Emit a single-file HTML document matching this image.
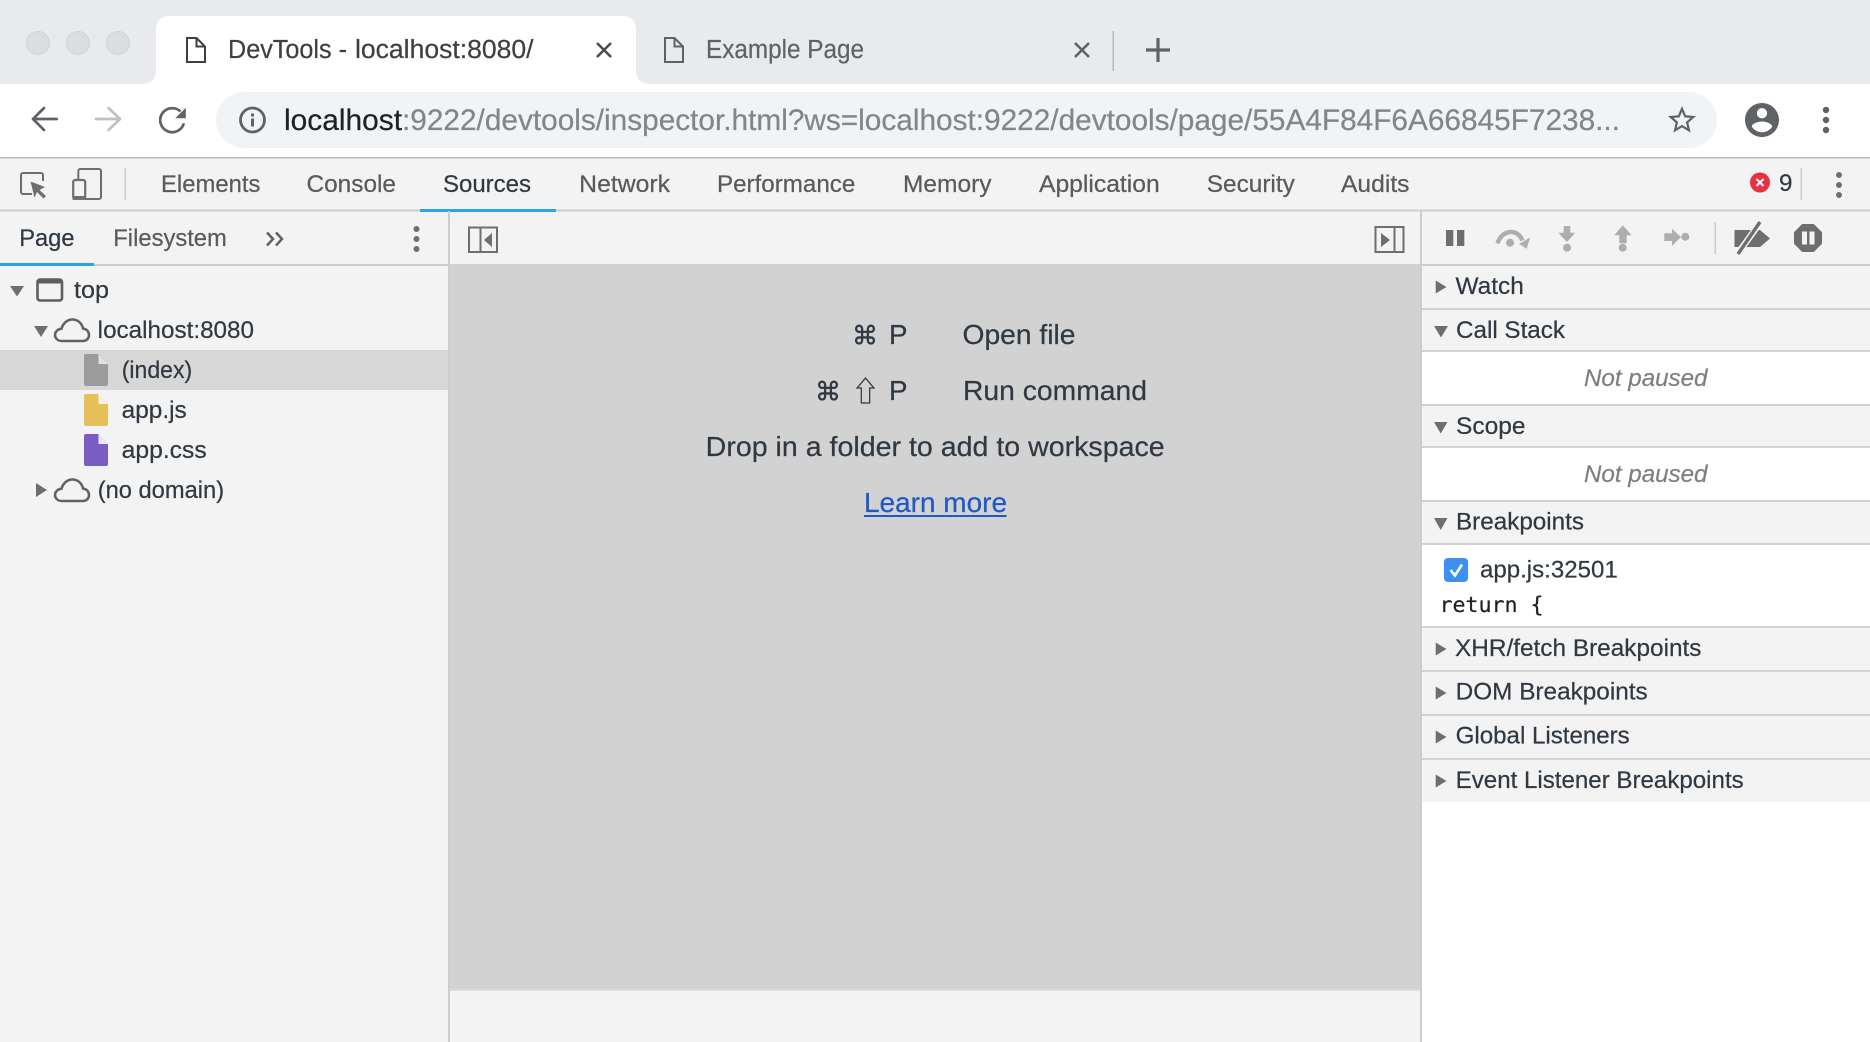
<!DOCTYPE html>
<html lang="en"><head><meta charset="utf-8"><title>DevTools</title>
<style>
html,body{margin:0;padding:0;width:1870px;height:1042px;overflow:hidden;background:#fff}
svg{position:absolute;left:0;top:0;display:block;filter:blur(.35px)}
text{font-family:"Liberation Sans",Arial,sans-serif;white-space:pre;stroke-width:.22px}
.d{font-size:24px;fill:#303942;stroke:#303942}
.n{font-size:23.7px;fill:#5a5a5a;stroke:#5a5a5a}
.s{fill:#303942;stroke:#303942}
.c{font-size:27.700px}
.m{font-size:26px;font-family:"DejaVu Sans",sans-serif;stroke-width:.4px}
</style></head><body>
<svg width="1870" height="1042" viewBox="0 0 1870 1042" xmlns="http://www.w3.org/2000/svg">
<!-- tab strip -->
<rect width="1870" height="84" fill="#e8eaed"/>
<rect y="84" width="1870" height="73" fill="#fff"/>
<g fill="#dcdde0" stroke="#d2d3d6" stroke-width="1"><circle cx="38" cy="43" r="11.5"/><circle cx="78" cy="43" r="11.5"/><circle cx="118" cy="43" r="11.5"/></g>
<path d="M142 84Q156 84 156 70V30Q156 16 170 16H622Q636 16 636 30V70Q636 84 650 84Z" fill="#fff"/>
<path d="M187 38H196.500L205 46.500V62H187ZM196.500 38V46.500H205" fill="none" stroke="#3c4043" stroke-width="2"/>
<text x="228" y="58" font-size="25.5" fill="#3c4043" stroke="#3c4043" textLength="119" lengthAdjust="spacingAndGlyphs">DevTools -</text>
<text x="355" y="58" font-size="25.5" fill="#3c4043" stroke="#3c4043" textLength="178.500" lengthAdjust="spacingAndGlyphs">localhost:8080/</text>
<path d="M597 43L611 57M611 43L597 57" stroke="#4a4d51" stroke-width="2.600"/>
<path d="M665 38H674.500L683 46.500V62H665ZM674.500 38V46.500H683" fill="none" stroke="#5f6368" stroke-width="2"/>
<text x="706" y="58" font-size="25.5" fill="#5f6368" stroke="#5f6368" textLength="158" lengthAdjust="spacingAndGlyphs">Example Page</text>
<path d="M1075 43L1089 57M1089 43L1075 57" stroke="#5f6368" stroke-width="2.600"/>
<rect x="1112.500" y="31" width="1.500" height="40" fill="#b6b8bb"/>
<path d="M1146 50H1170M1158 38V62" stroke="#5f6368" stroke-width="3.200"/>
<!-- nav -->
<path d="M56.700 119H33.500M44 108L33 119L44 130" fill="none" stroke="#5f6368" stroke-width="2.700" stroke-linecap="round" stroke-linejoin="round"/>
<path d="M96 119H119.500M108.500 108L120 119L108.500 130" fill="none" stroke="#bdc1c6" stroke-width="2.700" stroke-linecap="round" stroke-linejoin="round"/>
<path d="M180.500 111.500A12 12 0 1 0 183.800 123.300" fill="none" stroke="#5f6368" stroke-width="2.700"/>
<path d="M185.800 107.800V118.200H175.200Z" fill="#5f6368"/>
<rect x="216" y="92" width="1501" height="56" rx="28" fill="#f1f3f4"/>
<circle cx="252.500" cy="120" r="12" fill="none" stroke="#5f6368" stroke-width="2.800"/>
<rect x="251" y="118.500" width="3" height="8" fill="#5f6368"/><rect x="251" y="113.500" width="3" height="3" fill="#5f6368"/>
<text x="284" y="130" font-size="30" fill="#202124" stroke="#202124" textLength="118" lengthAdjust="spacingAndGlyphs">localhost</text>
<text x="402" y="130" font-size="30" fill="#80868b" stroke="#80868b" textLength="1218" lengthAdjust="spacingAndGlyphs">:9222/devtools/inspector.html?ws=localhost:9222/devtools/page/55A4F84F6A66845F7238...</text>
<path transform="translate(1665.200 103.200) scale(1.400)" fill="#5f6368" d="M22 9.240l-7.190-.62L12 2 9.190 8.630 2 9.240l5.460 4.730L5.820 21 12 17.270 18.180 21l-1.630-7.030L22 9.240zM12 15.400l-3.760 2.270 1-4.280-3.320-2.880 4.380-.38L12 6.100l1.710 4.040 4.380.38-3.320 2.880 1 4.280L12 15.400z"/>
<path transform="translate(1741.600 99.600) scale(1.700)" fill="#5f6368" d="M12 2C6.480 2 2 6.480 2 12s4.480 10 10 10 10-4.480 10-10S17.520 2 12 2zm0 3c1.660 0 3 1.340 3 3s-1.340 3-3 3-3-1.340-3-3 1.340-3 3-3zm0 14.200c-2.500 0-4.710-1.280-6-3.220.03-1.990 4-3.080 6-3.080 1.990 0 5.970 1.090 6 3.080-1.290 1.940-3.500 3.220-6 3.220z"/>
<g fill="#5f6368"><circle cx="1826" cy="110" r="3.200"/><circle cx="1826" cy="120" r="3.200"/><circle cx="1826" cy="130" r="3.200"/></g>
<rect y="157" width="1870" height="1.500" fill="#b9b9b9"/>
<!-- devtools background -->
<rect y="158.500" width="1870" height="884" fill="#f3f3f3"/>
<rect y="209.500" width="1870" height="2" fill="#cdcdcd"/>
<path d="M32 194H23a2 2 0 0 1-2-2V175a2 2 0 0 1 2-2H41a2 2 0 0 1 2 2V181" fill="none" stroke="#6e6e6e" stroke-width="2"/>
<path d="M30.500 181.500L45 187L39.500 190L46 196L43.500 198.500L37 192L34.500 197.500Z" fill="#6e6e6e"/>
<path d="M78.300 179V171a2 2 0 0 1 2-2H99a2 2 0 0 1 2 2V197a2 2 0 0 1-2 2H85" fill="none" stroke="#6e6e6e" stroke-width="2"/>
<rect x="73.200" y="180" width="12" height="18.800" rx="2" fill="#f3f3f3" stroke="#6e6e6e" stroke-width="2.200"/>
<rect x="72.500" y="196" width="13.500" height="3.800" fill="#6e6e6e"/>
<rect x="124.500" y="168" width="1.500" height="32" fill="#ccc"/>
<text class="n" x="161" y="192" textLength="99.400" lengthAdjust="spacingAndGlyphs">Elements</text>
<text class="n" x="306.500" y="192" textLength="89.500" lengthAdjust="spacingAndGlyphs">Console</text>
<text class="n" x="443" y="192" style="fill:#303942;stroke:#303942" textLength="88" lengthAdjust="spacingAndGlyphs">Sources</text>
<text class="n" x="579.200" y="192" textLength="90.800" lengthAdjust="spacingAndGlyphs">Network</text>
<text class="n" x="717" y="192" textLength="138.300" lengthAdjust="spacingAndGlyphs">Performance</text>
<text class="n" x="903" y="192" textLength="88.500" lengthAdjust="spacingAndGlyphs">Memory</text>
<text class="n" x="1039" y="192" textLength="120.700" lengthAdjust="spacingAndGlyphs">Application</text>
<text class="n" x="1206.800" y="192" textLength="88" lengthAdjust="spacingAndGlyphs">Security</text>
<text class="n" x="1341" y="192" textLength="68.500" lengthAdjust="spacingAndGlyphs">Audits</text>
<rect x="420" y="209" width="136" height="3" fill="#2aa4e6"/>
<circle cx="1760" cy="182.500" r="10" fill="#e8303f"/>
<path d="M1756.500 179L1763.500 186M1763.500 179L1756.500 186" stroke="#fff" stroke-width="2"/>
<text class="n" x="1779" y="191" style="fill:#303942;stroke:#303942" textLength="13.500" lengthAdjust="spacingAndGlyphs">9</text>
<rect x="1800.500" y="168" width="1.500" height="32" fill="#ccc"/>
<g fill="#6e6e6e"><circle cx="1839" cy="175" r="3"/><circle cx="1839" cy="185" r="3"/><circle cx="1839" cy="195" r="3"/></g>
<!-- left sidebar -->
<text class="n" x="19.200" y="246" style="fill:#303942;stroke:#303942" textLength="55.300" lengthAdjust="spacingAndGlyphs">Page</text>
<text class="n" x="113.300" y="246" textLength="113.500" lengthAdjust="spacingAndGlyphs">Filesystem</text>
<path d="M267 232.500L273 239L267 245.500M276 232.500L282 239L276 245.500" fill="none" stroke="#5f6368" stroke-width="2.500"/>
<g fill="#6e6e6e"><circle cx="416.500" cy="229" r="3"/><circle cx="416.500" cy="239" r="3"/><circle cx="416.500" cy="249" r="3"/></g>
<rect y="264" width="450" height="2" fill="#cdcdcd"/>
<rect y="263" width="94" height="3" fill="#2aa4e6"/>
<rect x="448" y="211" width="2" height="831" fill="#cdcdcd"/>
<rect y="350" width="448" height="40" fill="#d7d7d7"/>
<!-- tree -->
<path d="M10 286H24L17 296.500Z" fill="#6e6e6e"/>
<rect x="37.500" y="279.500" width="24.500" height="21" rx="2.500" fill="none" stroke="#5e5e5e" stroke-width="2.600"/>
<rect x="37.500" y="279.500" width="24.500" height="4" fill="#5e5e5e"/>
<text class="d" x="74" y="298" textLength="35" lengthAdjust="spacingAndGlyphs">top</text>
<path d="M34 326H48L41 337Z" fill="#6e6e6e"/>
<path transform="translate(54 318)" d="M8 23C3 23 1 19.500 1 17C1 13.500 4 11 7.500 10.800C9 5 13.500 1.500 18.500 1.500C24 1.500 28 5.500 29 10.500C33 11 35 14 35 17C35 20.500 32.500 23 29 23Z" fill="none" stroke="#5f6368" stroke-width="2.500"/>
<text class="d" x="97.700" y="338" textLength="156.300" lengthAdjust="spacingAndGlyphs">localhost:8080</text>
<path d="M86 354H98L108 364V384a2 2 0 0 1-2 2H86a2 2 0 0 1-2-2V356a2 2 0 0 1 2-2Z" fill="#9c9c9c"/><path d="M98.500 354.500V364H108Z" fill="#e2e2e2"/>
<text class="d" x="121.700" y="378" textLength="70.500" lengthAdjust="spacingAndGlyphs">(index)</text>
<path d="M86 394H98L108 404V424a2 2 0 0 1-2 2H86a2 2 0 0 1-2-2V396a2 2 0 0 1 2-2Z" fill="#e6c15a"/><path d="M98.500 394.500V404H108Z" fill="#f8f2df"/>
<text class="d" x="121.700" y="418" textLength="65" lengthAdjust="spacingAndGlyphs">app.js</text>
<path d="M86 434H98L108 444V464a2 2 0 0 1-2 2H86a2 2 0 0 1-2-2V436a2 2 0 0 1 2-2Z" fill="#7c5dc6"/><path d="M98.500 434.500V444H108Z" fill="#ece6f6"/>
<text class="d" x="121.700" y="458" textLength="85" lengthAdjust="spacingAndGlyphs">app.css</text>
<path d="M36 483L47 490L36 497Z" fill="#6e6e6e"/>
<path transform="translate(54 478)" d="M8 23C3 23 1 19.500 1 17C1 13.500 4 11 7.500 10.800C9 5 13.500 1.500 18.500 1.500C24 1.500 28 5.500 29 10.500C33 11 35 14 35 17C35 20.500 32.500 23 29 23Z" fill="none" stroke="#5f6368" stroke-width="2.500"/>
<text class="d" x="97.700" y="498" textLength="126.400" lengthAdjust="spacingAndGlyphs">(no domain)</text>
<!-- center -->
<rect x="469" y="227.500" width="28" height="24.500" fill="none" stroke="#6e6e6e" stroke-width="2"/>
<rect x="479.500" y="227.500" width="2" height="24.500" fill="#6e6e6e"/>
<path d="M492 233V247L484 240Z" fill="#6e6e6e"/>
<rect x="450" y="264" width="970" height="725" fill="#d2d2d2"/>
<rect x="450" y="989" width="970" height="2" fill="#dcdcdc"/>
<rect x="1375.500" y="227" width="28" height="25" fill="none" stroke="#6e6e6e" stroke-width="2"/>
<rect x="1393.500" y="227" width="2" height="25" fill="#6e6e6e"/>
<path d="M1381 233V247L1390 240Z" fill="#6e6e6e"/>
<text class="s m" x="852" y="344.500" textLength="26" lengthAdjust="spacingAndGlyphs">⌘</text>
<text class="s c" x="889" y="344" textLength="18.500" lengthAdjust="spacingAndGlyphs">P</text>
<text class="s c" x="962.500" y="344" textLength="113" lengthAdjust="spacingAndGlyphs">Open file</text>
<text class="s m" x="815" y="400.500" textLength="26" lengthAdjust="spacingAndGlyphs">⌘</text>
<text x="865.500" y="401" text-anchor="middle" fill="#303942" stroke="#303942" style='font-size:28px;font-family:"Noto Sans CJK JP","Noto Sans CJK SC","DejaVu Sans",sans-serif'>⇧</text>
<text class="s c" x="889" y="400" textLength="18.500" lengthAdjust="spacingAndGlyphs">P</text>
<text class="s c" x="963" y="400" textLength="184" lengthAdjust="spacingAndGlyphs">Run command</text>
<text class="s c" x="705.700" y="456" textLength="459" lengthAdjust="spacingAndGlyphs">Drop in a folder to add to workspace</text>
<text class="c" x="864" y="512" fill="#1f58c8" stroke="#1f58c8" textLength="143" lengthAdjust="spacingAndGlyphs">Learn more</text>
<rect x="864" y="515" width="142.500" height="2" fill="#1f58c8"/>
<!-- right panel -->
<rect x="1420" y="211" width="2" height="831" fill="#cdcdcd"/>
<rect x="1422" y="264" width="448" height="2" fill="#cdcdcd"/>
<rect x="1714.500" y="222" width="1.500" height="32" fill="#ccc"/>
<rect x="1446" y="230" width="7.300" height="16" fill="#6e6e6e"/><rect x="1457" y="230" width="7.300" height="16" fill="#6e6e6e"/>
<g fill="#aeaeae">
<path d="M1497.500 243.500C1500 235.500 1505.500 232 1511 232C1516 232 1520 235 1522.500 240.500" fill="none" stroke="#aeaeae" stroke-width="4.400"/>
<path d="M1519 244L1530 237.500L1526.700 248.700Z"/><circle cx="1510" cy="242.700" r="4"/>
<path d="M1563.700 226H1570.300V232.700H1575.300L1567 242L1558.300 232.700H1563.700Z"/><circle cx="1567" cy="247.700" r="4"/>
<path d="M1622.700 225.300L1631.700 235.300H1626.700V243.300H1619.300V235.300H1614.300Z"/><circle cx="1622.700" cy="247.700" r="4"/>
<path d="M1664.300 233.300H1672V228.700L1681 237L1672 246V241H1664.300Z"/><circle cx="1685.300" cy="236.700" r="4"/>
</g>
<path d="M1734.500 230H1760L1770 238.500L1760 247H1734.500Z" fill="#6e6e6e"/>
<path d="M1762 220L1736 256" stroke="#f3f3f3" stroke-width="6.500"/>
<path d="M1760 222L1738 254" stroke="#6e6e6e" stroke-width="3.400"/>
<path d="M1802.200 224H1813.800L1822 232.200V243.800L1813.800 252H1802.200L1794 243.800V232.200Z" fill="#6e6e6e"/>
<rect x="1802" y="231.500" width="5" height="13" fill="#f3f3f3"/><rect x="1809.500" y="231.500" width="5" height="13" fill="#f3f3f3"/>
<rect x="1422" y="308" width="448" height="2" fill="#d2d2d2"/>
<rect x="1422" y="350" width="448" height="2" fill="#d2d2d2"/>
<rect x="1422" y="352" width="448" height="52" fill="#fff"/>
<rect x="1422" y="404" width="448" height="2" fill="#d2d2d2"/>
<rect x="1422" y="446" width="448" height="2" fill="#d2d2d2"/>
<rect x="1422" y="448" width="448" height="52" fill="#fff"/>
<rect x="1422" y="500" width="448" height="2" fill="#d2d2d2"/>
<rect x="1422" y="543" width="448" height="2" fill="#d2d2d2"/>
<rect x="1422" y="545" width="448" height="81" fill="#fff"/>
<rect x="1422" y="626" width="448" height="2" fill="#d2d2d2"/>
<rect x="1422" y="670" width="448" height="2" fill="#d2d2d2"/>
<rect x="1422" y="714" width="448" height="2" fill="#d2d2d2"/>
<rect x="1422" y="758" width="448" height="2" fill="#d2d2d2"/>
<rect x="1422" y="802" width="448" height="240" fill="#fff"/>
<g fill="#6e6e6e">
<path d="M1435.700 280.500L1446.500 287L1435.700 293.500Z"/>
<path d="M1434 326H1448L1441 337.500Z"/>
<path d="M1434 422H1447.500L1440.700 433.500Z"/>
<path d="M1434 518H1447.500L1440.700 530Z"/>
<path d="M1435.700 642.500L1446.500 649L1435.700 655.500Z"/>
<path d="M1435.700 686.500L1446.500 693L1435.700 699.500Z"/>
<path d="M1435.700 730.500L1446.500 737L1435.700 743.500Z"/>
<path d="M1435.700 774.500L1446.500 781L1435.700 787.500Z"/>
</g>
<text class="d" x="1455.500" y="294" textLength="68.300" lengthAdjust="spacingAndGlyphs">Watch</text>
<text class="d" x="1456" y="338" textLength="109" lengthAdjust="spacingAndGlyphs">Call Stack</text>
<text x="1584" y="386" font-size="24" font-style="italic" fill="#7f7f7f" stroke="#7f7f7f" textLength="123.500" lengthAdjust="spacingAndGlyphs">Not paused</text>
<text class="d" x="1456" y="434" textLength="69.500" lengthAdjust="spacingAndGlyphs">Scope</text>
<text x="1584" y="482" font-size="24" font-style="italic" fill="#7f7f7f" stroke="#7f7f7f" textLength="123.500" lengthAdjust="spacingAndGlyphs">Not paused</text>
<text class="d" x="1456" y="529.500" textLength="128" lengthAdjust="spacingAndGlyphs">Breakpoints</text>
<rect x="1444" y="558" width="24" height="24" rx="4" fill="#3d8ff0"/>
<path d="M1450.500 570L1455 575.500L1462 564.500" fill="none" stroke="#fff" stroke-width="2.600"/>
<text class="d" x="1480" y="577.500" textLength="137.700" lengthAdjust="spacingAndGlyphs">app.js:32501</text>
<text x="1439.500" y="612" font-size="21.200" fill="#222" stroke="#222" style='font-family:"DejaVu Sans Mono",monospace' textLength="104" lengthAdjust="spacingAndGlyphs">return {</text>
<text class="d" x="1455" y="656" textLength="246.500" lengthAdjust="spacingAndGlyphs">XHR/fetch Breakpoints</text>
<text class="d" x="1455.700" y="699.500" textLength="192" lengthAdjust="spacingAndGlyphs">DOM Breakpoints</text>
<text class="d" x="1455.700" y="743.500" textLength="174" lengthAdjust="spacingAndGlyphs">Global Listeners</text>
<text class="d" x="1455.700" y="788" textLength="288" lengthAdjust="spacingAndGlyphs">Event Listener Breakpoints</text>
</svg>
</body></html>
